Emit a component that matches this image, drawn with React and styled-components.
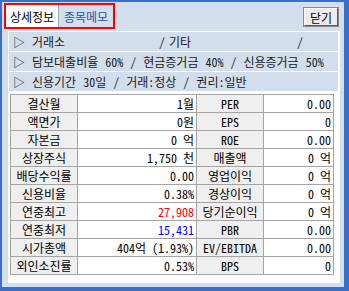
import React from 'react'
import styled, { createGlobalStyle } from 'styled-components';

const GlobalStyle = createGlobalStyle`
  html, body { margin: 0; padding: 0; background: #ffffff; }
  body {
    font-family: "Noto Sans CJK KR", sans-serif;
    font-feature-settings: "hwid";
    font-size: 12px;
    color: #000000;
  }
`;

const rows = [
      ['결산월', '1월', 'PER', '0.00'],
      ['액면가', '0원', 'EPS', '0'],
      ['자본금', '0 억', 'ROE', '0.00'],
      ['상장주식', '1,750 천', '매출액', '0 억'],
      ['배당수익률', '0.00', '영업이익', '0 억'],
      ['신용비율', '0.38%', '경상이익', '0 억'],
      ['연중최고', '27,908', '당기순이익', '0 억', 'up'],
      ['연중최저', '15,431', 'PBR', '0.00', 'down'],
      ['시가총액', '404억 (1.93%)', 'EV/EBITDA', '0.00'],
      ['외인소진률', '0.53%', 'BPS', '0'],
];

export default function App() {
      return (
            <>
                  <GlobalStyle />
                  <Window>
                        <Header>
                              <TabGroup>
                                    <Tab active>상세정보</Tab>
                                    <Tab>종목메모</Tab>
                              </TabGroup>
                              <CloseButton>닫기</CloseButton>
                        </Header>
                        <Panel>
                              <InfoRow>
                                    <Arrow>▷</Arrow>
                                    <InfoCell w={127}>거래소</InfoCell>
                                    <InfoCell w={10}>/</InfoCell>
                                    <InfoCell w={128}>기타</InfoCell>
                                    <InfoCell>/</InfoCell>
                              </InfoRow>
                              <InfoRow>
                                    <Arrow>▷</Arrow>
                                    <InfoCell>담보대출비율 60% / 현금증거금 40% / 신용증거금 50%</InfoCell>
                              </InfoRow>
                              <InfoRow>
                                    <Arrow>▷</Arrow>
                                    <InfoCell>신용기간 30일 / 거래:정상 / 권리:일반</InfoCell>
                              </InfoRow>
                              <Grid>
                                    {rows.map(([l1, v1, l2, v2, tone]) => (
                                          <React.Fragment key={l1}>
                                                <Label>{l1}</Label>
                                                <Value tone={tone}>{v1}</Value>
                                                <Label>{l2}</Label>
                                                <Value>{v2}</Value>
                                          </React.Fragment>
                                    ))}
                              </Grid>
                        </Panel>
                  </Window>
            </>
      );
}

const Window = styled.div`
  width: 349px;
  height: 291px;
  box-sizing: border-box;
  border-style: solid;
  border-color: #3b6ec6;
  border-width: 2px 5px 4px 2px;
  background: #d3dfed;
  padding: 1px 4px 4px 6px;
  display: flex;
  flex-direction: column;
`;

const Header = styled.div`
  height: 28px;
  display: flex;
  align-items: flex-start;
  justify-content: space-between;
  margin-left: -4px;
`;

const TabGroup = styled.div`
  display: flex;
  border: 2px solid #ff0000;
  box-sizing: border-box;
  height: 26px;
  width: 111px;
  background: #d3dfed;
`;

const Tab = styled.div`
  width: ${p => (p.active ? '52px' : '54px')};
  display: flex;
  align-items: center;
  justify-content: center;
  font-size: 12px;
  color: ${p => (p.active ? '#000000' : '#2a52a6')};
  background: ${p => (p.active ? '#ffffff' : '#d3dfed')};
  border-left: ${p => (p.active ? 'none' : '1px solid #9aa8ba')};
`;

const CloseButton = styled.div`
  margin: 5px 2px 0 0;
  width: 34px;
  height: 18px;
  box-sizing: border-box;
  border: 1px solid #5a5a5a;
  border-top-color: #ffffff;
  border-left-color: #ffffff;
  box-shadow: 0 0 0 1px #8a8a8a;
  background: #ececec;
  font-size: 12px;
  display: flex;
  align-items: center;
  justify-content: center;
`;

const Panel = styled.div`
  flex: 1;
  background: #ffffff;
  padding: 1px 2px 0 1px;
  display: flex;
  flex-direction: column;
  gap: 1px;
`;

const InfoRow = styled.div`
  height: 19px;
  background: #d2deec;
  display: flex;
  align-items: center;
  font-size: 12px;
  padding-left: 4px;
  white-space: nowrap;
  word-spacing: 1px;
  color: #1a1a1a;
`;

const Arrow = styled.span`
  width: 19px;
  font-size: 12px;
  font-feature-settings: normal;
`;

const InfoCell = styled.span`
  width: ${p => (p.w ? `${p.w}px` : 'auto')};
  flex-shrink: 0;
`;

const Grid = styled.div`
  margin: 2px 0 0 1px;
  width: 324px;
  display: grid;
  grid-template-columns: 66px 118px 66px 69px;
  grid-auto-rows: 17px;
  gap: 1px;
  background: #a4a4a4;
  border: 1px solid #a4a4a4;
  box-sizing: border-box;
`;

const Label = styled.div`
  background: #efefef;
  display: flex;
  align-items: center;
  justify-content: center;
  white-space: nowrap;
`;

const Value = styled.div`
  background: #ffffff;
  display: flex;
  align-items: center;
  justify-content: flex-end;
  padding-right: 2px;
  white-space: nowrap;
  color: ${p => (p.tone === 'up' ? '#ff0000' : p.tone === 'down' ? '#0000ff' : '#000000')};
`;
